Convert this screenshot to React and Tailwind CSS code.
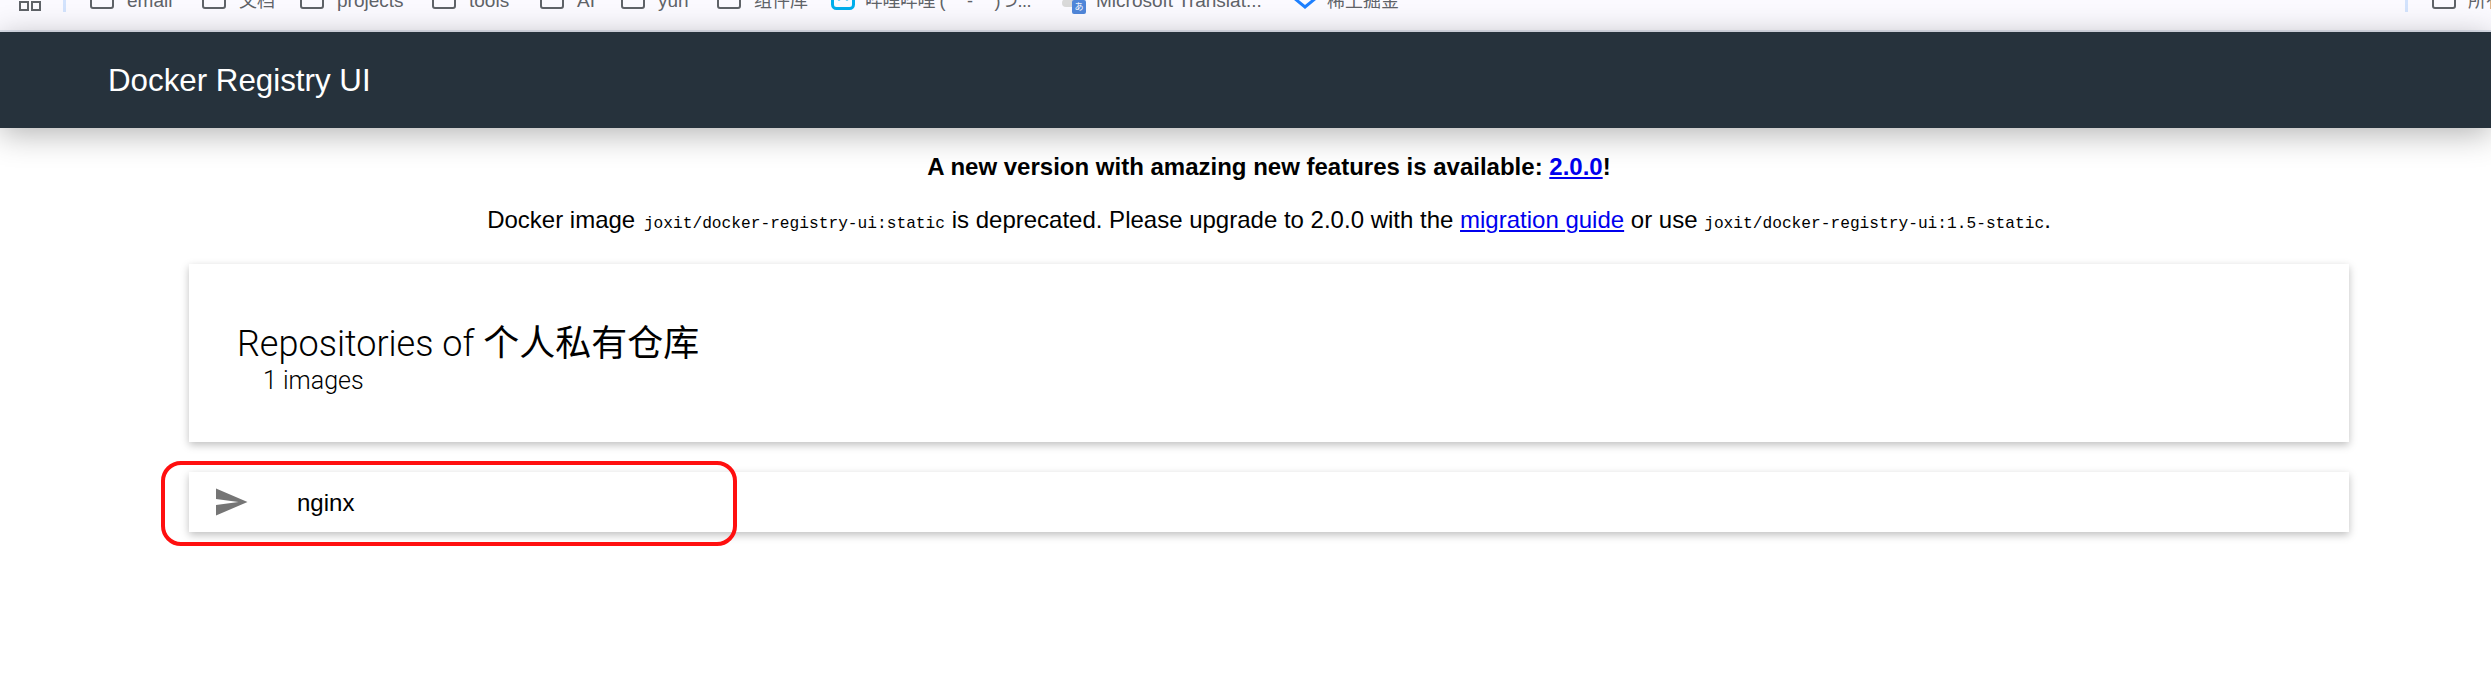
import React from "react";
import { MdSend } from "react-icons/md";

const folders = [
  { label: "email", w: "w-[112px]", text: "text-[19px]" },
  { label: "文档", w: "w-[98px]", text: "text-[18px]" },
  { label: "projects", w: "w-[132px]", text: "text-[19px]" },
  { label: "tools", w: "w-[108px]", text: "text-[19px]" },
  { label: "AI", w: "w-[81px]", text: "text-[19px]" },
  { label: "yun", w: "w-[96px]", text: "text-[19px]" },
  { label: "组件库", w: "w-[114px]", text: "text-[18px]" },
];

const Folder = () => (
  <span className="block w-[24px] h-[20px] mb-[4px] shrink-0 rounded-[3px] border-2 border-[#5f6368]" />
);

const BiliIcon = () => (
  <svg viewBox="0 0 24 20" className="w-[24px] h-[20px] mb-[2px] shrink-0">
    <rect x="1.5" y="1.5" width="21" height="17" rx="4" fill="none" stroke="#00aeec" strokeWidth="3" />
    <circle cx="8" cy="9" r="1.6" fill="#00aeec" />
    <circle cx="16" cy="9" r="1.6" fill="#00aeec" />
  </svg>
);

const TranslatorIcon = () => (
  <div className="relative w-[34px] h-[24px] shrink-0">
    <span className="absolute left-0 top-[10px] w-[16px] h-[8px] rounded-full bg-[#d9d9d9]" />
    <span className="absolute right-[10px] bottom-[-1px] w-[14px] h-[14px] rounded-[2px] bg-[#4f86d9] text-white text-[9px] leading-[14px] text-center font-['Noto_Sans_CJK_JP',sans-serif]">
      あ
    </span>
  </div>
);

const JuejinIcon = () => (
  <svg viewBox="0 0 24 12" className="w-[24px] h-[12px] mb-[-1px] self-start mt-[9px] shrink-0">
    <path d="M1 0 12 9 23 0" fill="none" stroke="#1e80ff" strokeWidth="3" />
  </svg>
);

const BookmarkBar = () => (
  <div className="h-[32px] bg-[#fbfaff] border-b-2 border-[#dfe3ee] overflow-hidden flex items-start pl-[19px] text-[#5f6368] leading-[24px] whitespace-nowrap font-['Liberation_Sans','Noto_Sans_CJK_SC',sans-serif]">
    <div className="flex gap-[2px] mt-[1px] shrink-0">
      <span className="block w-[10px] h-[10px] border-2 border-[#5f6368]" />
      <span className="block w-[10px] h-[10px] border-2 border-[#5f6368]" />
    </div>
    <div className="w-[3px] h-[12px] bg-[#d3e3fd] ml-[22px] mr-[24px] shrink-0" />
    <div className="flex -mt-[11px] h-[24px] flex-1">
      {folders.map((b) => (
        <div key={b.label} className={`flex items-center gap-[13px] shrink-0 ${b.w} ${b.text}`}>
          <Folder />
          <span>{b.label}</span>
        </div>
      ))}
      <div className="flex items-center gap-[10px] w-[231px] shrink-0 text-[18px]">
        <BiliIcon />
        <span className="tracking-[-0.5px]">哔哩哔哩 ( ゜- ゜)つ...</span>
      </div>
      <div className="flex items-center w-[231px] shrink-0 text-[19px]">
        <TranslatorIcon />
        <span>Microsoft Translat...</span>
      </div>
      <div className="flex items-center gap-[10px] shrink-0 text-[18px]">
        <JuejinIcon />
        <span>稀土掘金</span>
      </div>
    </div>
    <div className="w-[86px] flex shrink-0 overflow-hidden">
      <div className="w-[3px] h-[12px] bg-[#d3e3fd] mr-[24px] shrink-0" />
      <div className="flex items-center gap-[12px] -mt-[11px] h-[24px] text-[18px] shrink-0">
        <Folder />
        <span>所有书签</span>
      </div>
    </div>
  </div>
);

const App = () => {
  return (
    <div className="min-h-[686px] bg-white text-black font-['Liberation_Sans','Noto_Sans_CJK_SC',sans-serif]">
      <BookmarkBar />
      <header className="h-[96px] bg-[#26323c] flex items-center pl-[108px] pt-[2px] text-[31.3px] text-white shadow-[0_6px_30px_rgba(0,0,0,0.3)] relative">
        Docker Registry UI
      </header>

      <div className="w-[2160px] ml-[189px]">
        <div className="text-center pt-[25px] text-[24px] leading-[28px]">
          <p className="font-bold">
            A new version with amazing new features is available:{" "}
            <a href="#" className="text-[#0000ee] underline">2.0.0</a>!
          </p>
          <p className="mt-[25px]">
            Docker image{" "}
            <code className="font-['Liberation_Mono',monospace] text-[16.2px] leading-none ml-[2px]">joxit/docker-registry-ui:static</code>{" "}
            is deprecated. Please upgrade to 2.0.0 with the{" "}
            <a href="#" className="text-[#0000ee] underline">migration guide</a> or use{" "}
            <code className="font-['Liberation_Mono',monospace] text-[16.2px] leading-none">joxit/docker-registry-ui:1.5-static</code>.
          </p>
        </div>

        <section className="mt-[30px] h-[178px] bg-white shadow-[0_3px_8px_rgba(0,0,0,0.25)] pl-[48px] pt-[57px] font-['Roboto','Noto_Sans_CJK_SC',sans-serif] font-light">
          <h2 className="text-[36px] leading-[46px]">
            Repositories of <span className="font-normal">个人私有仓库</span>
          </h2>
          <div className="text-[25px] leading-[28px] pl-[26px]">1 images</div>
        </section>

        <div className="relative mt-[30px] h-[60px] bg-white shadow-[0_3px_8px_rgba(0,0,0,0.25)] flex items-center pl-[24px]">
          <MdSend className="w-[36px] h-[36px] text-[#757575]" />
          <span className="ml-[48px] pt-[2px] text-[24px]">nginx</span>
          <div className="absolute left-[-28px] top-[-11px] w-[576px] h-[85px] rounded-[20px] border-[4px] border-[#ff0f0f]" />
        </div>
      </div>
    </div>
  );
};

export default App;
